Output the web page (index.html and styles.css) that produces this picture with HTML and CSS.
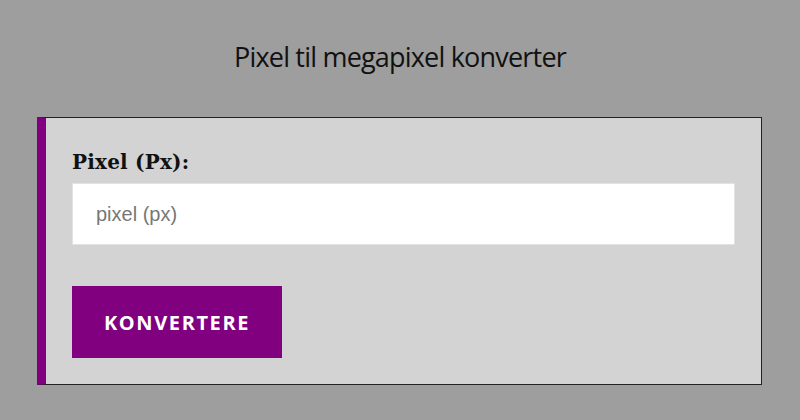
FILE: index.html
```html
<!DOCTYPE html>
<html>
<head>
<meta charset="utf-8">
<link rel="stylesheet" href="styles.css">
</head>
<body>
<h1 class="title">Pixel til megapixel konverter</h1>
<div class="card">
  <label class="label" for="px">Pixel (Px):</label>
  <input class="input" id="px" type="text" placeholder="pixel (px)">
  <button class="btn">KONVERTERE</button>
</div>
</body>
</html>
```
FILE: styles.css
```css
html, body { margin: 0; padding: 0; }
body {
  background: #9e9e9e;
  width: 800px;
  height: 420px;
  overflow: hidden;
  padding-top: 42px;
  box-sizing: border-box;
}
.title {
  margin: 0 0 45px 0;
  text-align: center;
  font-family: "Open Sans", sans-serif;
  font-weight: 400;
  font-size: 27px;
  letter-spacing: -0.8px;
  line-height: 30px;
  color: #111;
}
.card {
  margin-left: 37px;
  width: 725px;
  height: 268px;
  box-sizing: border-box;
  background: #d3d3d3;
  border: 1px solid #222;
  border-left: 9px solid #800080;
  padding: 31px 26px 0 26px;
  display: flex;
  flex-direction: column;
  align-items: flex-start;
}
.label {
  font-family: "DejaVu Serif", serif;
  font-weight: 700;
  font-size: 20px;
  letter-spacing: 0.2px;
  line-height: 26px;
  color: #111;
  margin-bottom: 8px;
}
.input {
  width: 100%;
  height: 62px;
  box-sizing: border-box;
  border: 1px solid #e2e2e2;
  background: #fff;
  padding: 0 23px;
  font-family: "Liberation Sans", sans-serif;
  font-size: 20px;
  outline: none;
  margin: 0 0 41px 0;
}
.input::placeholder { color: #777; }
.btn {
  width: 210px;
  height: 72px;
  border: none;
  background: #800080;
  color: #fff;
  font-family: "Open Sans", sans-serif;
  font-weight: 700;
  font-size: 20px;
  letter-spacing: 1.6px;
  padding: 0;
}
```
